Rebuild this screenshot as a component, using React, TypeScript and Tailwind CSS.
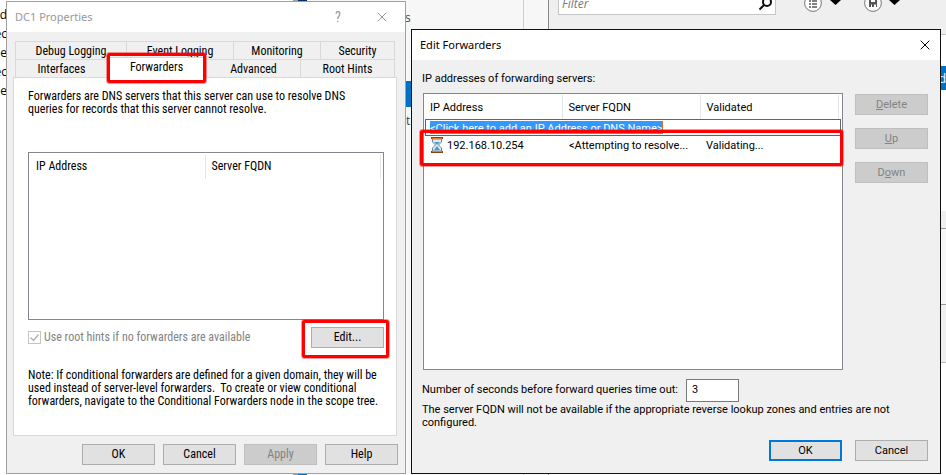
import type { ReactNode } from "react";
import { X } from "lucide-react";

const tabFont = "font-['Roboto_Condensed',Roboto,sans-serif] text-[12px] leading-[13px]";
const dialogFont = "font-['Roboto','Liberation_Sans',sans-serif] text-[11px] leading-[13px]";

function Callout({ className }: { className: string }) {
  return (
    <div
      aria-hidden="true"
      className={`pointer-events-none absolute rounded-xs border-[3px] border-[#fe0000] outline outline-[#fe0000]/40 ${className}`}
    />
  );
}

function PushButton({
  children,
  disabled = false,
  primary = false,
}: {
  children: ReactNode;
  disabled?: boolean;
  primary?: boolean;
}) {
  const look = disabled
    ? "border border-[#bfbfbf] bg-[#cccccc] text-[#838383]"
    : primary
      ? "border-2 border-[#0078d7] bg-[#e1e1e1]"
      : "border border-[#adadad] bg-[#e1e1e1]";
  return (
    <button type="button" disabled={disabled} className={`h-[21px] w-[73px] text-center ${look}`}>
      {children}
    </button>
  );
}

function Hourglass() {
  return (
    <svg width="14" height="16" viewBox="0 0 14 16" aria-hidden="true">
      <path d="M2.500 2h9v3L8.500 8l3 3v3h-9v-3l3-3-3-3z" fill="#dcecf5" stroke="#6d8796" />
      <path d="M4 5h6L7 8zM7 9l3 4H4z" fill="#4f9ac4" />
      <path d="M1 1h12M1 15h12" stroke="#8a4310" strokeWidth="2" />
      <path d="M2 1.500h10M2 14.500h10" stroke="#d98235" />
    </svg>
  );
}

function Desktop() {
  return (
    <div className="flex h-full font-['Open_Sans',sans-serif] text-[12px] leading-[19px]">
      <div className="flex w-[293px] shrink-0 flex-col bg-white pt-[5px]">
        {["d", "ec", "e", "ec", "e"].map((t, i) => (
          <span key={i} className="flex w-[7px] justify-end overflow-hidden">
            {t}
          </span>
        ))}
      </div>
      <div className="w-[5px] shrink-0 bg-[#a0a0a0]" />
      <div className="flex w-[9px] shrink-0 flex-col bg-[#0072c6]">
        <div className="h-[30px] bg-[#002f6c]" />
      </div>
      <div className="flex w-[217px] shrink-0 flex-col border-r border-[#cfcfcf] bg-[#f7f7f7] text-[#444]">
        <span className="pt-2 pl-[98px]">s</span>
        <div className="mt-[54px] h-[26px] bg-[#0072c6]" />
        <span className="mt-1 pl-[99px]">t</span>
      </div>
      <div className="w-[24px] shrink-0 bg-[#f7f7f7]" />
      <div className="flex min-w-0 flex-1 flex-col border-l border-[#888] bg-white">
        <div className="flex h-[35px] items-start border-b border-[#c6c6c6] bg-[#efefef] pl-[9px]">
          <div className="relative -mt-2 flex h-[23px] w-[218px] items-center border border-[#c6c6c6] bg-white">
            <input
              aria-label="Filter"
              placeholder="Filter"
              className="w-full px-[3px] text-[12px] leading-4 italic outline-none placeholder:text-[#777]"
            />
            <svg width="16" height="18" viewBox="0 0 16 18" className="mr-[1px] shrink-0" aria-hidden="true">
              <circle cx="9" cy="7" r="4" fill="none" stroke="#111" strokeWidth="2" />
              <path d="M6 10l-4.500 4.500" stroke="#111" strokeWidth="2" />
            </svg>
          </div>
          <svg width="44" height="13" viewBox="0 0 44 13" className="ml-[27px]" aria-hidden="true">
            <circle cx="10" cy="3" r="8.400" fill="#fff" stroke="#777" />
            <path d="M6 1h2M9 1h5M6 4h2M9 4h5M6 7h2M9 7h5" stroke="#555" strokeWidth="1.600" />
            <path d="M27 0h11l-5.500 5z" fill="#000" />
          </svg>
          <svg width="44" height="13" viewBox="0 0 44 13" className="ml-4" aria-hidden="true">
            <circle cx="10" cy="3" r="8.400" fill="#fff" stroke="#777" />
            <path d="M6 0h2v2h4V0h2v7h-1V4.500H11V7H9V4.500H8V7H6z" fill="#555" />
            <path d="M26 0h11l-5.500 5z" fill="#000" />
          </svg>
        </div>
        <div className="mt-[31px] flex h-6 items-center justify-end bg-[#0072c6] text-white">d</div>
        <div className="mt-[121px] h-[18px] border-b border-[#999] bg-[#efefef]" />
        <div className="h-[76px] border-b border-[#999] bg-[#f7f7f7]" />
        <div className="h-[58px] border-b border-[#bbb] bg-[#efefef]" />
      </div>
    </div>
  );
}

function Tab({ label, className }: { label: string; className: string }) {
  return (
    <button
      type="button"
      role="tab"
      className={`h-[18px] border-t border-l border-[#d9d9d9] pt-px text-center ${className}`}
    >
      {label}
    </button>
  );
}

function PropertiesWindow() {
  return (
    <section
      aria-label="DC1 Properties"
      className={`absolute top-px left-1.5 flex h-[473px] w-[400px] flex-col border border-[#a0a0a0] bg-[#f0f0f0] ${tabFont}`}
    >
      <header className="flex h-[30px] items-center bg-white pl-2 text-[#999]">
        <h1 className="flex-1 font-['Noto_Sans',sans-serif] text-[11px] leading-4">DC1 Properties</h1>
        <button type="button" aria-label="Help" className="mr-[33px] text-[14px] leading-4">
          ?
        </button>
        <button type="button" aria-label="Close" className="mr-[15px]">
          <X size={16} strokeWidth={1.500} />
        </button>
      </header>

      <div className="relative pt-[9px] pr-2 pl-1.5">
        <div role="tablist" className="mx-0.5">
          <div className="flex border-r border-[#d9d9d9]">
            <Tab label="Debug Logging" className="w-[111px]" />
            <Tab label="Event Logging" className="w-[107px]" />
            <Tab label="Monitoring" className="w-[87px]" />
            <Tab label="Security" className="flex-1" />
          </div>
          <div className="flex items-end border-r border-[#d9d9d9]">
            <Tab label="Interfaces" className="w-[92px]" />
            <button
              type="button"
              role="tab"
              aria-selected="true"
              className="-mt-0.5 -mb-px h-[21px] w-[99px] border-x border-t border-[#d9d9d9] bg-white pb-0.5"
            >
              Forwarders
            </button>
            <Tab label="Advanced" className="w-[94px]" />
            <Tab label="Root Hints" className="flex-1" />
          </div>
        </div>
        <Callout className="top-[21px] left-[100px] h-[30px] w-[99px]" />
        <div className="h-[359px] border border-[#d9d9d9] bg-white pt-3 pr-3 pl-3.5">
          <p>
            Forwarders are DNS servers that this server can use to resolve DNS
            <br />
            queries for records that this server cannot resolve.
          </p>
          <div className="mt-9 h-[168px] border border-[#828790] pt-0.5">
            <table className="w-full table-fixed text-left">
              <thead>
                <tr className="h-6">
                  <th className="w-[176px] border-r border-[#e5e5e5] p-0 pb-0.5 pl-[7px] font-normal">IP Address</th>
                  <th className="border-r border-[#e5e5e5] p-0 pb-0.5 pl-1.5 font-normal">Server FQDN</th>
                  <th aria-label="Spacer" className="w-[3px]" />
                </tr>
              </thead>
            </table>
          </div>
          <div className="relative mt-[7px] flex items-center justify-between">
            <label className="flex items-center gap-[3px] text-[#838383]">
              <span className="relative flex">
                <input
                  type="checkbox"
                  defaultChecked
                  disabled
                  className="size-[13px] appearance-none border border-[#c4c4c4] bg-white"
                />
                <svg width="13" height="13" viewBox="0 0 13 13" className="absolute inset-0" aria-hidden="true">
                  <path d="M2.500 6.500l3 3 5-6" fill="none" stroke="#b0b0b0" strokeWidth="1.300" />
                </svg>
              </span>
              Use root hints if no forwarders are available
            </label>
            <PushButton>Edit...</PushButton>
            <Callout className="-top-[7px] -right-[5px] h-[38px] w-[87px]" />
          </div>
          <p className="mt-[21px]">
            Note: If conditional forwarders are defined for a given domain, they will be
            <br />
            used instead of server-level forwarders.&nbsp; To create or view conditional
            <br />
            forwarders, navigate to the Conditional Forwarders node in the scope tree.
          </p>
        </div>
      </div>

      <footer className="mt-2 flex justify-end gap-2 pr-[7px]">
        <PushButton>OK</PushButton>
        <PushButton>Cancel</PushButton>
        <PushButton disabled>Apply</PushButton>
        <PushButton>Help</PushButton>
      </footer>
    </section>
  );
}

function EditForwardersDialog() {
  return (
    <section
      role="dialog"
      aria-label="Edit Forwarders"
      className={`absolute top-[29px] left-[411px] flex h-[445px] w-[530px] flex-col border border-[#111] bg-[#f0f0f0] ${dialogFont}`}
    >
      <header className="flex h-[30px] items-center justify-between bg-white pr-[7px] pl-2">
        <h2 className="font-['Noto_Sans',sans-serif] text-[11px] leading-4">Edit Forwarders</h2>
        <button type="button" aria-label="Close">
          <X size={16} strokeWidth={1.500} />
        </button>
      </header>

      <div className="flex flex-1 flex-col pt-3 pr-3 pl-[10px]">
        <p>IP addresses of forwarding servers:</p>
        <div className="mt-2 flex gap-3 pl-px">
          <div className="relative h-[277px] flex-1 border border-[#828790] bg-white px-px pt-px">
            <table className="w-full table-fixed text-left">
              <thead>
                <tr className="h-[24px]">
                  <th className="w-[137px] border-r border-[#e5e5e5] p-0 pl-[5px] font-normal">IP Address</th>
                  <th className="w-[138px] border-r border-[#e5e5e5] p-0 pl-1.5 font-normal">Server FQDN</th>
                  <th className="w-[138px] border-r border-[#e5e5e5] p-0 pl-1.5 font-normal">Validated</th>
                  <th aria-label="Spacer" />
                </tr>
              </thead>
              <tbody>
                <tr>
                  <td colSpan={4} className="p-0">
                    <div className="flex h-[17px] items-center border border-[#646464] pl-1">
                      <input
                        aria-label="New forwarder"
                        defaultValue="<Click here to add an IP Address or DNS Name>"
                        className="h-[13px] w-[233px] border-r border-[#d9701a] bg-[#3399ff] pt-px text-white outline-none"
                      />
                    </div>
                  </td>
                </tr>
                <tr className="h-[17px]">
                  <td className="p-0 pt-px pl-[5px]">
                    <span className="flex items-center gap-[3px]">
                      <Hourglass />
                      192.168.10.254
                    </span>
                  </td>
                  <td className="p-0 pt-px pl-[7px]">&lt;Attempting to resolve...</td>
                  <td className="p-0 pt-px pl-1.5">Validating...</td>
                  <td />
                </tr>
              </tbody>
            </table>
            <Callout className="top-9 -left-1 h-9 w-[423px]" />
          </div>
          <div className="flex flex-col gap-[13px] pt-px">
            <PushButton disabled>
              <u>D</u>elete
            </PushButton>
            <PushButton disabled>
              <u>U</u>p
            </PushButton>
            <PushButton disabled>
              D<u>o</u>wn
            </PushButton>
          </div>
        </div>
        <div className="mt-[9px] flex items-center">
          <label htmlFor="timeout" className="w-[264px] pb-0.5 whitespace-nowrap">
            Number of seconds before forward queries time out:
          </label>
          <input
            id="timeout"
            defaultValue="3"
            className="h-[23px] w-[53px] border border-[#7a7a7a] bg-white px-[5px] pb-0.5 outline-none"
          />
        </div>
        <p className="mt-px">
          The server FQDN will not be available if the appropriate reverse lookup zones and entries are not
          <br />
          configured.
        </p>
        <footer className="mt-[11px] flex justify-end gap-[13px]">
          <PushButton primary>OK</PushButton>
          <PushButton>Cancel</PushButton>
        </footer>
      </div>
    </section>
  );
}

export default function App() {
  return (
    <main className="relative h-screen overflow-hidden bg-white text-black">
      <Desktop />
      <PropertiesWindow />
      <EditForwardersDialog />
    </main>
  );
}
